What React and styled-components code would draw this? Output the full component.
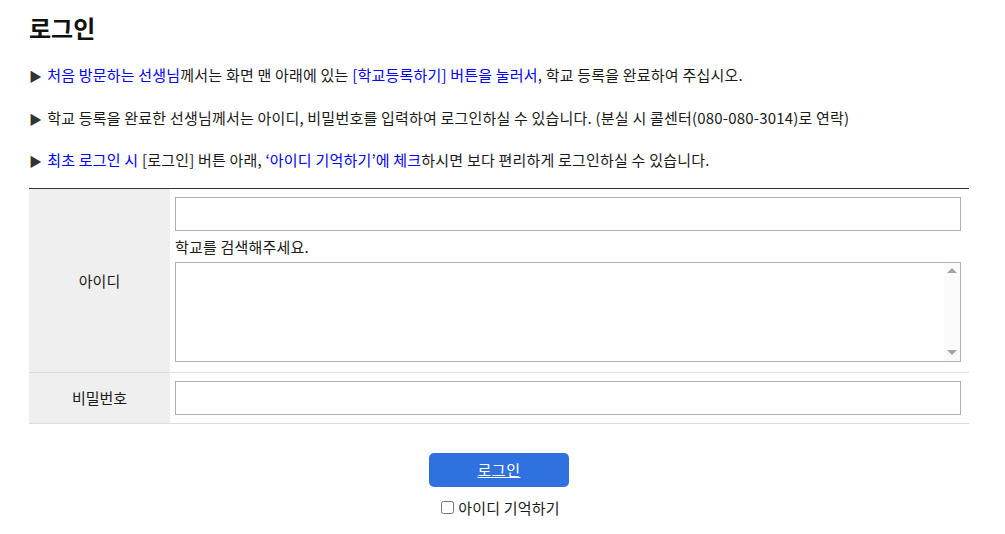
import React from "react";
import styled, { createGlobalStyle } from "styled-components";

const GlobalStyle = createGlobalStyle`
  body {
    margin: 0;
    background: #fff;
    color: #1a1a1a;
    font-family: "Noto Sans CJK KR", "Noto Sans", sans-serif;
  }
`;

const Page = styled.div`
  width: 940px;
  padding: 0 0 20px 29px;
`;

const Title = styled.h2`
  margin: 0;
  padding-top: 11px;
  font-size: 24px;
  font-weight: 700;
  line-height: 34px;
  color: #111;
`;

const Notices = styled.ul`
  list-style: none;
  margin: 20px 0 0;
  padding: 0;
`;

const Notice = styled.li`
  font-size: 15px;
  line-height: 20px;
  margin-bottom: 21.5px;
  letter-spacing: 0.2px;

  &:last-child {
    margin-bottom: 0;
  }

  &::before {
    content: "▶";
    font-size: 13px;
    margin-right: 5px;
    color: #333;
  }
`;

const Blue = styled.span`
  color: #0000ff;
`;

const FormTable = styled.div`
  display: grid;
  grid-template-columns: 141px 1fr;
  border-top: 1px solid #333;
  margin-top: 16.5px;
`;

const Label = styled.div`
  display: flex;
  align-items: center;
  justify-content: center;
  background: #efefef;
  font-size: 15px;
  border-bottom: 1px solid #ddd;
`;

const Cell = styled.div`
  padding: ${(p) => p.$pad || "8px 8px 10px 5px"};
  border-bottom: 1px solid #ddd;
  display: flex;
  flex-direction: column;
`;

const TextInput = styled.input`
  box-sizing: border-box;
  width: 100%;
  height: 34px;
  border: 1px solid #b0b0b0;
  margin: 0;
  padding: 0 6px;
  font: inherit;
`;

const Hint = styled.div`
  font-size: 15px;
  line-height: 20px;
  margin: 6px 0 5px;
  letter-spacing: 0.2px;
`;

const ResultBox = styled.div`
  display: flex;
  height: 100px;
  box-sizing: border-box;
  border: 1px solid #b0b0b0;
`;

const Results = styled.textarea`
  flex: 1;
  border: none;
  margin: 0;
  resize: none;
  outline: none;
  font: inherit;
`;

const Rail = styled.div`
  width: 16px;
  background: #fafafa;
  display: flex;
  flex-direction: column;
  justify-content: space-between;
  align-items: center;
  padding: 5px 0 6px;
`;

const Arrow = styled.span`
  width: 0;
  height: 0;
  border-left: 5px solid transparent;
  border-right: 5px solid transparent;
  ${(p) =>
    p.$down
      ? "border-top: 5px solid #a3a3a3;"
      : "border-bottom: 5px solid #a3a3a3;"}
`;

const Actions = styled.div`
  display: flex;
  flex-direction: column;
  align-items: center;
  margin-top: 29px;
`;

const LoginButton = styled.a`
  display: flex;
  align-items: center;
  justify-content: center;
  width: 140px;
  height: 34px;
  border-radius: 5px;
  background: #2f72df;
  color: #fff;
  font-size: 15px;
  letter-spacing: 0.5px;
  text-decoration: underline;
  cursor: pointer;
`;

const Remember = styled.label`
  display: flex;
  align-items: center;
  margin-top: 10px;
  font-size: 15px;
  letter-spacing: 0.2px;

  input {
    margin: 0 4px 0 3px;
    width: 13px;
    height: 13px;
  }
`;

export default function App() {
  return (
    <Page>
      <GlobalStyle />
      <Title>로그인</Title>
      <Notices>
        <Notice>
          <Blue>처음 방문하는 선생님</Blue>께서는 화면 맨 아래에 있는{" "}
          <Blue>[학교등록하기] 버튼을 눌러서</Blue>, 학교 등록을 완료하여
          주십시오.
        </Notice>
        <Notice>
          학교 등록을 완료한 선생님께서는 아이디, 비밀번호를 입력하여
          로그인하실 수 있습니다. (분실 시 콜센터(080-080-3014)로 연락)
        </Notice>
        <Notice>
          <Blue>최초 로그인 시</Blue> [로그인] 버튼 아래,{" "}
          <Blue>‘아이디 기억하기’에 체크</Blue>하시면 보다 편리하게
          로그인하실 수 있습니다.
        </Notice>
      </Notices>
      <FormTable>
        <Label>아이디</Label>
        <Cell>
          <TextInput type="text" />
          <Hint>학교를 검색해주세요.</Hint>
          <ResultBox>
            <Results />
            <Rail>
              <Arrow />
              <Arrow $down />
            </Rail>
          </ResultBox>
        </Cell>
        <Label>비밀번호</Label>
        <Cell $pad="8px 8px 8px 5px">
          <TextInput type="password" />
        </Cell>
      </FormTable>
      <Actions>
        <LoginButton>로그인</LoginButton>
        <Remember>
          <input type="checkbox" />
          아이디 기억하기
        </Remember>
      </Actions>
    </Page>
  );
}
